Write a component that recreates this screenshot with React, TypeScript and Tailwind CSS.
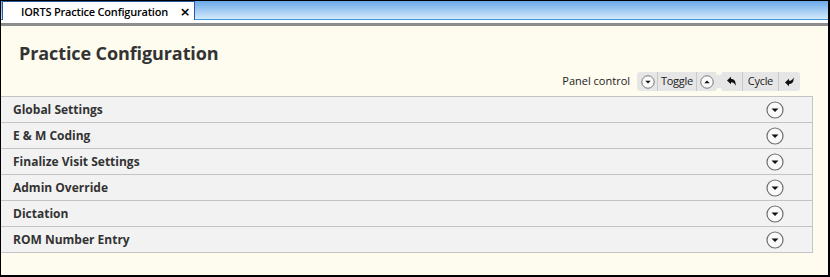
import React from 'react'

const sections = [
  'Global Settings',
  'E & M Coding',
  'Finalize Visit Settings',
  'Admin Override',
  'Dictation',
  'ROM Number Entry',
]

function CircleArrow({ up = false, size = 18 }: { up?: boolean; size?: number }) {
  return (
    <svg width={size} height={size} viewBox="0 0 18 18">
      <circle cx="9" cy="9" r="8" fill="#fafafa" stroke="#6e6e6e" strokeWidth="1.2" />
      {up ? (
        <path d="M5.5 10.5 L9 7 L12.5 10.5 Z" fill="#111" />
      ) : (
        <path d="M5.5 7.5 L9 11 L12.5 7.5 Z" fill="#111" />
      )}
    </svg>
  )
}

// curved bold arrow, mirrored vertically for the "cycle forward" one
function CurveArrow({ flip = false }: { flip?: boolean }) {
  return (
    <svg width="11" height="11" viewBox="0 0 11 11" className={flip ? '-scale-y-100' : ''}>
      <path d="M1 4.5 L5 0.8 L5 3 C8.5 3 10 5.5 9.6 9.8 C8.6 7.2 7.2 6.2 5 6.2 L5 8.2 Z" fill="#111" />
    </svg>
  )
}

export default function App() {
  return (
    <div className="w-[830px] h-[277px] flex flex-col bg-[#fefbef] border-l border-r-2 border-b-2 border-t border-black font-['Open_Sans',sans-serif] text-[#333]">
      <div className="h-[19px] flex items-end bg-gradient-to-b from-[#6aa9e8] to-[#d3e9fb] border-b border-[#3b9ae0] pl-px">
        <div className="h-[19px] -mb-px w-[193px] bg-white border-t border-l border-r border-[#2a57a8] flex items-center pl-[18px] pr-[4px]">
          <span className="text-[11px] font-semibold text-black tracking-[-0.2px] leading-none">IORTS Practice Configuration</span>
          <span className="ml-auto text-[17px] leading-none text-black font-semibold">×</span>
        </div>
      </div>
      <div className="h-[3px] bg-white" />
      <div className="h-[3px] bg-[#8c8c8c]" />

      <h1 className="mt-[15px] ml-[18px] text-[18px] font-bold text-[#333] leading-[24px] tracking-[-0.1px]">Practice Configuration</h1>

      <div className="mt-[7px] flex items-center justify-end pr-[28px] h-[19px]">
        <span className="text-[11px] text-[#222] mr-[7px]">Panel control</span>
        <div className="flex items-center h-[19px] bg-[#e6e6e6] rounded-[3px] text-[11px] text-[#222] tracking-[-0.3px]">
          <div className="pl-[4px] pr-[2px] flex items-center"><CircleArrow size={14} /></div>
          <div className="px-[3px] border-l border-r border-[#c9c9c9] h-full flex items-center">Toggle</div>
          <div className="px-[3px] flex items-center"><CircleArrow up size={14} /></div>
          <div className="relative w-[4px] h-full">
            <div className="absolute -top-[2px] -left-[1px] w-[6px] h-[5px] rounded-full bg-[#fefbef]" />
            <div className="absolute -bottom-[2px] -left-[1px] w-[6px] h-[5px] rounded-full bg-[#fefbef]" />
          </div>
          <div className="px-[5px] flex items-center"><CurveArrow /></div>
          <div className="px-[5px] border-l border-r border-[#c9c9c9] h-full flex items-center">Cycle</div>
          <div className="px-[5px] flex items-center"><CurveArrow flip /></div>
        </div>
      </div>

      <div className="mt-[5px] mr-[15px] border-t border-r border-[#c4c4c4]">
        {sections.map((s) => (
          <div key={s} className="h-[26px] bg-[#f2f2f2] border-b border-[#c4c4c4] flex items-center pl-[12px] pr-[28px]">
            <span className="text-[12px] font-bold text-[#333]">{s}</span>
            <span className="ml-auto flex"><CircleArrow /></span>
          </div>
        ))}
      </div>
    </div>
  )
}
